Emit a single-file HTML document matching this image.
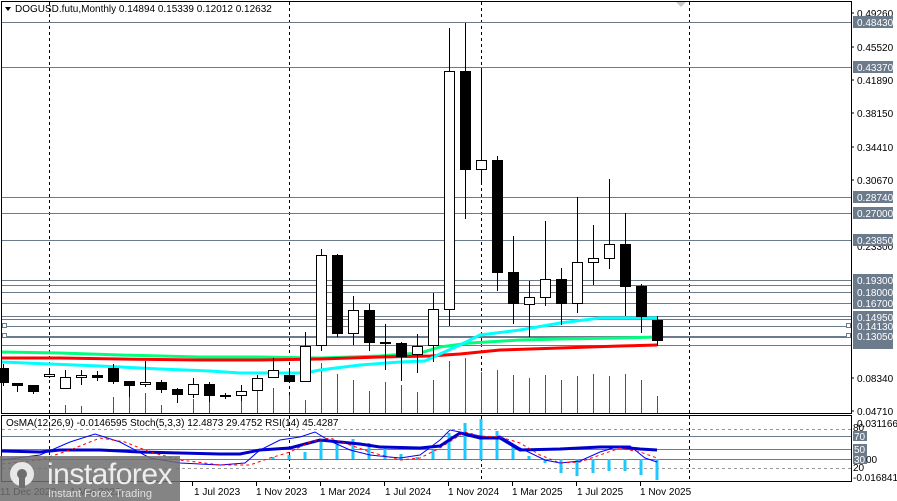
<!DOCTYPE html>
<html><head><meta charset="utf-8"><style>
html,body{margin:0;padding:0;background:#fff;width:897px;height:501px;overflow:hidden}
svg{display:block;font-family:"Liberation Sans",Tahoma,sans-serif}
.ax{font-size:10px;fill:#000}
.lb{font-size:10px;fill:#fff}
</style></head><body>
<svg width="897" height="501" viewBox="0 0 897 501" xmlns="http://www.w3.org/2000/svg">
<rect width="897" height="501" fill="#fff"/>
<!-- frames -->
<rect x="1.5" y="1.5" width="850" height="412" fill="none" stroke="#000"/>
<rect x="1.5" y="415.5" width="850" height="66" fill="none" stroke="#000"/>
<!-- vertical dashed separators -->
<g stroke="#000" stroke-dasharray="3,3">
<line x1="49.5" y1="2" x2="49.5" y2="481"/>
<line x1="289.5" y1="2" x2="289.5" y2="481"/>
<line x1="481.5" y1="2" x2="481.5" y2="481"/>
<line x1="689.5" y1="2" x2="689.5" y2="481"/>
</g>
<!-- horizontal level lines -->
<g stroke="#6b7b8c" stroke-width="1">
<line x1="2" y1="22.5" x2="851" y2="22.5"/>
<line x1="2" y1="67.5" x2="851" y2="67.5"/>
<line x1="2" y1="197.5" x2="851" y2="197.5"/>
<line x1="2" y1="213.5" x2="851" y2="213.5"/>
<line x1="2" y1="240.5" x2="851" y2="240.5"/>
<line x1="2" y1="280.5" x2="851" y2="280.5"/>
<line x1="2" y1="285.5" x2="851" y2="285.5"/>
<line x1="2" y1="292.5" x2="851" y2="292.5"/>
<line x1="2" y1="303.5" x2="851" y2="303.5"/>
<line x1="2" y1="316.5" x2="851" y2="316.5"/>
<line x1="2" y1="319.5" x2="851" y2="319.5"/>
<line x1="2" y1="326.5" x2="851" y2="326.5"/>
<line x1="2" y1="336.5" x2="851" y2="336.5"/>
<line x1="2" y1="337.5" x2="851" y2="337.5"/>
<line x1="2" y1="345.5" x2="851" y2="345.5"/>
</g>
<rect x="2.5" y="323.5" width="4" height="4" fill="#fff" stroke="#6b7b8c"/>
<rect x="2.5" y="333.5" width="4" height="4" fill="#fff" stroke="#6b7b8c"/>
<rect x="846.5" y="323.5" width="4" height="4" fill="#fff" stroke="#6b7b8c"/>
<rect x="846.5" y="333.5" width="4" height="4" fill="#fff" stroke="#6b7b8c"/>
<!-- volume bars -->
<g stroke="#1a7a1a" stroke-width="1">
<line x1="65.5" y1="405" x2="65.5" y2="413"/><line x1="81.5" y1="406" x2="81.5" y2="413"/>
<line x1="113.5" y1="397" x2="113.5" y2="413"/><line x1="129.5" y1="392" x2="129.5" y2="413"/>
<line x1="145.5" y1="393" x2="145.5" y2="413"/><line x1="161.5" y1="405" x2="161.5" y2="413"/>
<line x1="193.5" y1="399" x2="193.5" y2="413"/><line x1="209.5" y1="400" x2="209.5" y2="413"/>
<line x1="241.5" y1="395" x2="241.5" y2="413"/><line x1="257.5" y1="390" x2="257.5" y2="413"/>
<line x1="273.5" y1="388" x2="273.5" y2="413"/><line x1="289.5" y1="395" x2="289.5" y2="413"/>
<line x1="305.5" y1="400" x2="305.5" y2="413"/><line x1="321.5" y1="363" x2="321.5" y2="413"/>
<line x1="337.5" y1="374" x2="337.5" y2="413"/><line x1="353.5" y1="380" x2="353.5" y2="413"/>
<line x1="369.5" y1="391" x2="369.5" y2="413"/><line x1="385.5" y1="382" x2="385.5" y2="413"/>
<line x1="401.5" y1="385" x2="401.5" y2="413"/><line x1="417.5" y1="392" x2="417.5" y2="413"/>
<line x1="433.5" y1="380" x2="433.5" y2="413"/><line x1="449.5" y1="361" x2="449.5" y2="413"/>
<line x1="465.5" y1="358" x2="465.5" y2="413"/><line x1="481.5" y1="372" x2="481.5" y2="413"/>
<line x1="497.5" y1="370" x2="497.5" y2="413"/><line x1="513.5" y1="375" x2="513.5" y2="413"/>
<line x1="529.5" y1="378" x2="529.5" y2="413"/><line x1="545.5" y1="375" x2="545.5" y2="413"/>
<line x1="561.5" y1="380" x2="561.5" y2="413"/><line x1="577.5" y1="376" x2="577.5" y2="413"/>
<line x1="593.5" y1="374" x2="593.5" y2="413"/><line x1="609.5" y1="376" x2="609.5" y2="413"/>
<line x1="625.5" y1="374" x2="625.5" y2="413"/><line x1="641.5" y1="380" x2="641.5" y2="413"/>
<line x1="657.5" y1="396" x2="657.5" y2="413"/>
</g>
<!-- moving averages -->
<polyline fill="none" stroke="#00ff7f" stroke-width="3" points="2,352 60,353 120,355 200,357 260,357 320,358 380,356 420,353 440,347 470,343 520,340 560,339 620,338 657,337"/>
<polyline fill="none" stroke="#ff0000" stroke-width="3" points="2,358 60,358 120,359 200,360 260,360 320,359 380,357 430,356 460,354 500,350 560,348 620,346 657,345"/>
<polyline fill="none" stroke="#00ffff" stroke-width="3" points="2,362 50,364 100,366 160,369 210,371 240,373 280,373 305,373 320,370 360,365 400,362 425,361 440,354 460,345 480,335 520,330 560,323 600,318 657,318"/>
<!-- candles -->
<g stroke="#000" stroke-width="1">
<line x1="3.5" y1="364" x2="3.5" y2="386"/><rect x="-1.5" y="368.5" width="10" height="14" fill="#000"/>
<line x1="17.5" y1="383" x2="17.5" y2="392"/><rect x="12.5" y="383.5" width="10" height="2" fill="#000"/>
<line x1="33.5" y1="385" x2="33.5" y2="394"/><rect x="28.5" y="385.5" width="10" height="6" fill="#000"/>
<line x1="49.5" y1="370" x2="49.5" y2="378"/><rect x="44.5" y="374.5" width="10" height="2" fill="#fff"/>
<line x1="65.5" y1="370" x2="65.5" y2="389"/><rect x="60.5" y="377.5" width="10" height="11" fill="#fff"/>
<line x1="81.5" y1="370" x2="81.5" y2="385"/><rect x="76.5" y="375.5" width="10" height="2" fill="#fff"/>
<line x1="97.5" y1="371" x2="97.5" y2="381"/><rect x="92.5" y="375.5" width="10" height="2" fill="#000"/>
<line x1="113.5" y1="364" x2="113.5" y2="384"/><rect x="108.5" y="368.5" width="10" height="13" fill="#000"/>
<line x1="129.5" y1="381" x2="129.5" y2="397"/><rect x="124.5" y="381.5" width="10" height="4" fill="#000"/>
<line x1="145.5" y1="361" x2="145.5" y2="387"/><rect x="140.5" y="382.5" width="10" height="2" fill="#fff"/>
<line x1="161.5" y1="380" x2="161.5" y2="393"/><rect x="156.5" y="382.5" width="10" height="7" fill="#000"/>
<line x1="177.5" y1="388" x2="177.5" y2="403"/><rect x="172.5" y="389.5" width="10" height="5" fill="#000"/>
<line x1="193.5" y1="378" x2="193.5" y2="398"/><rect x="188.5" y="384.5" width="10" height="10" fill="#fff"/>
<line x1="209.5" y1="382" x2="209.5" y2="402"/><rect x="204.5" y="384.5" width="10" height="11" fill="#000"/>
<line x1="225.5" y1="393" x2="225.5" y2="399"/><rect x="220.5" y="395.5" width="10" height="1" fill="#000"/>
<line x1="241.5" y1="385" x2="241.5" y2="401"/><rect x="236.5" y="391.5" width="10" height="4" fill="#fff"/>
<line x1="257.5" y1="375" x2="257.5" y2="391"/><rect x="252.5" y="378.5" width="10" height="12" fill="#fff"/>
<line x1="273.5" y1="358" x2="273.5" y2="378"/><rect x="268.5" y="370.5" width="10" height="7" fill="#fff"/>
<line x1="289.5" y1="370" x2="289.5" y2="382"/><rect x="284.5" y="375.5" width="10" height="6" fill="#000"/>
<line x1="305.5" y1="332" x2="305.5" y2="382"/><rect x="300.5" y="346.5" width="10" height="35" fill="#fff"/>
<line x1="321.5" y1="249" x2="321.5" y2="351"/><rect x="316.5" y="255.5" width="10" height="90" fill="#fff"/>
<line x1="337.5" y1="254" x2="337.5" y2="337"/><rect x="332.5" y="255.5" width="10" height="78" fill="#000"/>
<line x1="353.5" y1="296" x2="353.5" y2="345"/><rect x="348.5" y="310.5" width="10" height="23" fill="#fff"/>
<line x1="369.5" y1="304" x2="369.5" y2="351"/><rect x="364.5" y="310.5" width="10" height="32" fill="#000"/>
<line x1="385.5" y1="324" x2="385.5" y2="370"/><rect x="380.5" y="342.5" width="10" height="1" fill="#000"/>
<line x1="401.5" y1="342" x2="401.5" y2="381"/><rect x="396.5" y="343.5" width="10" height="13" fill="#000"/>
<line x1="417.5" y1="334" x2="417.5" y2="373"/><rect x="412.5" y="346.5" width="10" height="8" fill="#fff"/>
<line x1="433.5" y1="293" x2="433.5" y2="362"/><rect x="428.5" y="309.5" width="10" height="36" fill="#fff"/>
<line x1="449.5" y1="28" x2="449.5" y2="326"/><rect x="444.5" y="71.5" width="10" height="238" fill="#fff"/>
<line x1="465.5" y1="23" x2="465.5" y2="219"/><rect x="460.5" y="71.5" width="10" height="98" fill="#000"/>
<line x1="481.5" y1="68" x2="481.5" y2="183"/><rect x="476.5" y="160.5" width="10" height="9" fill="#fff"/>
<line x1="497.5" y1="156" x2="497.5" y2="291"/><rect x="492.5" y="160.5" width="10" height="112" fill="#000"/>
<line x1="513.5" y1="236" x2="513.5" y2="324"/><rect x="508.5" y="272.5" width="10" height="31" fill="#000"/>
<line x1="529.5" y1="281" x2="529.5" y2="337"/><rect x="524.5" y="297.5" width="10" height="7" fill="#fff"/>
<line x1="545.5" y1="221" x2="545.5" y2="306"/><rect x="540.5" y="279.5" width="10" height="18" fill="#fff"/>
<line x1="561.5" y1="268" x2="561.5" y2="325"/><rect x="556.5" y="279.5" width="10" height="24" fill="#000"/>
<line x1="577.5" y1="197" x2="577.5" y2="313"/><rect x="572.5" y="262.5" width="10" height="41" fill="#fff"/>
<line x1="593.5" y1="225" x2="593.5" y2="285"/><rect x="588.5" y="258.5" width="10" height="4" fill="#fff"/>
<line x1="609.5" y1="179" x2="609.5" y2="269"/><rect x="604.5" y="244.5" width="10" height="14" fill="#fff"/>
<line x1="625.5" y1="213" x2="625.5" y2="316"/><rect x="620.5" y="244.5" width="10" height="42" fill="#000"/>
<line x1="641.5" y1="284" x2="641.5" y2="333"/><rect x="636.5" y="286.5" width="10" height="30" fill="#000"/>
<line x1="657.5" y1="316" x2="657.5" y2="346"/><rect x="652.5" y="320.5" width="10" height="20" fill="#000"/>
</g>
<!-- header -->
<path d="M5 7 L11 7 L8 11 Z" fill="#000"/>
<text x="15" y="12" font-size="10" fill="#000">DOGUSD.futu,Monthly  0.14894 0.15339 0.12012 0.12632</text>
<path d="M676 2 L686 2 L681 7 Z" fill="#c8c8c8"/>
<!-- right axis -->
<g stroke="#000"><line x1="851" y1="13" x2="854" y2="13"/><line x1="851" y1="47" x2="854" y2="47"/><line x1="851" y1="80" x2="854" y2="80"/><line x1="851" y1="113" x2="854" y2="113"/><line x1="851" y1="147" x2="854" y2="147"/><line x1="851" y1="180" x2="854" y2="180"/><line x1="851" y1="378" x2="854" y2="378"/><line x1="851" y1="411" x2="854" y2="411"/></g>
<text class="ax" x="857" y="17">0.49260</text>
<text class="ax" x="857" y="51">0.45520</text>
<text class="ax" x="857" y="84">0.41890</text>
<text class="ax" x="857" y="117">0.38150</text>
<text class="ax" x="857" y="151">0.34410</text>
<text class="ax" x="857" y="184">0.30670</text>
<text class="ax" x="857" y="250">0.23300</text>
<text class="ax" x="857" y="349">0.12000</text>
<text class="ax" x="857" y="382">0.08340</text>
<text class="ax" x="857" y="415">0.04710</text>
<g fill="#6b7b8c">
<rect x="853" y="16" width="40" height="12"/><rect x="853" y="61" width="40" height="12"/>
<rect x="853" y="191" width="40" height="12"/><rect x="853" y="207" width="40" height="12"/>
<rect x="853" y="234" width="40" height="12"/><rect x="853" y="274" width="40" height="12"/>
<rect x="853" y="286" width="40" height="12"/><rect x="853" y="297" width="40" height="12"/>
<rect x="853" y="311" width="40" height="12"/><rect x="853" y="320" width="40" height="12"/>
<rect x="853" y="330" width="40" height="12"/><rect x="853" y="339" width="40" height="10"/>
</g>
<g class="lb">
<text class="lb" x="857" y="26">0.48430</text><text class="lb" x="857" y="71">0.43370</text>
<text class="lb" x="857" y="201">0.28740</text><text class="lb" x="857" y="217">0.27000</text>
<text class="lb" x="857" y="244">0.23850</text><text class="lb" x="857" y="284">0.19300</text>
<text class="lb" x="857" y="296">0.18000</text><text class="lb" x="857" y="307">0.16700</text>
<text class="lb" x="857" y="321">0.14950</text><text class="lb" x="857" y="330">0.14130</text>
<text class="lb" x="857" y="340">0.13050</text>
</g>
<!-- indicator panel -->
<g stroke="#999" stroke-dasharray="3,3"><line x1="2" y1="429.5" x2="851" y2="429.5"/><line x1="2" y1="468.5" x2="851" y2="468.5"/></g>
<g stroke="#6b7b8c"><line x1="2" y1="436.5" x2="851" y2="436.5"/><line x1="2" y1="449.5" x2="851" y2="449.5"/><line x1="2" y1="459.5" x2="851" y2="459.5"/></g>
<g stroke="#1ec8ff" stroke-width="3">
<line x1="273" y1="457" x2="273" y2="459"/><line x1="289" y1="455" x2="289" y2="459"/><line x1="305" y1="452" x2="305" y2="459"/>
<line x1="321" y1="440" x2="321" y2="459"/><line x1="337" y1="441" x2="337" y2="459"/><line x1="353" y1="439" x2="353" y2="459"/>
<line x1="369" y1="443" x2="369" y2="459"/><line x1="385" y1="448" x2="385" y2="459"/><line x1="401" y1="454" x2="401" y2="459"/>
<line x1="417" y1="457" x2="417" y2="459"/><line x1="433" y1="450" x2="433" y2="459"/><line x1="449" y1="433" x2="449" y2="459"/>
<line x1="465" y1="423" x2="465" y2="459"/><line x1="481" y1="419" x2="481" y2="459"/><line x1="497" y1="431" x2="497" y2="459"/>
<line x1="513" y1="445" x2="513" y2="459"/><line x1="529" y1="456" x2="529" y2="459"/><line x1="545" y1="459" x2="545" y2="463"/>
<line x1="561" y1="459" x2="561" y2="473"/><line x1="577" y1="459" x2="577" y2="476"/><line x1="593" y1="459" x2="593" y2="473"/>
<line x1="609" y1="459" x2="609" y2="471"/><line x1="625" y1="459" x2="625" y2="471"/><line x1="641" y1="459" x2="641" y2="475"/>
<line x1="657" y1="459" x2="657" y2="480"/>
</g>
<polyline fill="none" stroke="#0000cc" stroke-width="3" points="2,451 40,452 60,450 100,450 140,452 180,453 220,454 240,454 260,450 290,448 320,440 340,442 360,444 380,447 420,448 440,446 460,433 480,438 500,438 520,450 560,449 580,448 600,447 620,447 640,449 657,450"/>
<polyline fill="none" stroke="#0000ff" stroke-width="1" points="2,460 40,455 70,442 95,434 120,442 150,458 180,463 220,465 245,463 260,450 280,440 300,437 315,432 330,441 350,450 370,455 400,458 420,455 440,440 450,430 470,434 490,438 500,436 520,448 545,460 560,463 580,461 600,452 620,446 630,446 645,458 657,462"/>
<polyline fill="none" stroke="#ff0000" stroke-width="1" stroke-dasharray="3,3" points="2,464 40,460 70,450 100,438 125,442 150,452 180,460 220,465 250,465 270,458 290,452 310,442 330,438 350,445 370,452 400,460 420,458 440,448 465,432 480,436 500,437 520,443 540,455 560,463 580,462 600,455 620,448 640,452 657,458"/>
<text x="6" y="426" font-size="10" fill="#000">OsMA(12,26,9) -0.0146595  Stoch(5,3,3) 12.4873 29.4752  RSI(14) 45.4287</text>
<text class="ax" x="857" y="427">0.0311667</text>
<text class="ax" x="853" y="431" font-size="9">80</text>
<g fill="#6b7b8c"><rect x="853" y="431" width="14" height="10"/><rect x="853" y="444" width="14" height="10"/><rect x="853" y="454" width="14" height="10"/></g>
<text class="lb" x="854" y="440">70</text><text class="lb" x="854" y="453">50</text><text class="lb" x="854" y="463">30</text>
<text class="ax" x="866" y="463">00</text>
<text class="ax" x="853" y="471" font-size="9">20</text>
<text class="ax" x="853" y="481">-0.0168417</text>
<!-- time axis -->
<g stroke="#000"><line x1="192.5" y1="482" x2="192.5" y2="486"/><line x1="256.5" y1="482" x2="256.5" y2="486"/><line x1="320.5" y1="482" x2="320.5" y2="486"/><line x1="384.5" y1="482" x2="384.5" y2="486"/><line x1="448.5" y1="482" x2="448.5" y2="486"/><line x1="512.5" y1="482" x2="512.5" y2="486"/><line x1="576.5" y1="482" x2="576.5" y2="486"/><line x1="640.5" y1="482" x2="640.5" y2="486"/></g>
<g class="ax">
<text x="0" y="495">11 Dec 2022</text><text x="70" y="495">1 Mar 2023</text>
<text x="194" y="495">1 Jul 2023</text><text x="256" y="495">1 Nov 2023</text>
<text x="320" y="495">1 Mar 2024</text><text x="385" y="495">1 Jul 2024</text>
<text x="448" y="495">1 Nov 2024</text><text x="512" y="495">1 Mar 2025</text>
<text x="577" y="495">1 Jul 2025</text><text x="640" y="495">1 Nov 2025</text>
</g>
<!-- watermark -->
<rect x="0" y="456" width="180" height="45" fill="#6e6e6e" fill-opacity="0.85"/>
<g fill="#e8e8e8">
<circle cx="22" cy="474" r="12"/>
<circle cx="22" cy="474" r="5" fill="#6e6e6e"/>
<rect x="19" y="474" width="6" height="14" fill="#6e6e6e"/>
</g>
<text x="47" y="484" font-size="30" fill="#eeeeee" letter-spacing="-0.5">instaforex</text>
<text x="48" y="497" font-size="11" fill="#e0e0e0">Instant Forex Trading</text>
</svg>
</body></html>
